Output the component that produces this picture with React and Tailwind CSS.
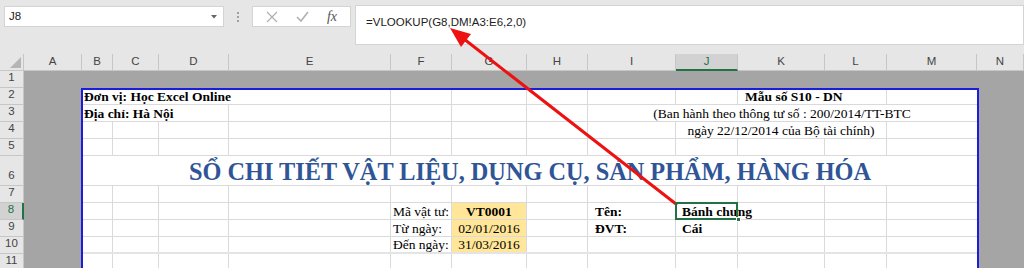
import React from "react";

// column widths inside the print area (B..M)
const W = { B: 30, C: 46, D: 70, E: 162, F: 61, G: 75, H: 61, I: 88, J: 62, K: 87, L: 62, M: 89 };
const COLS = ["B", "C", "D", "E", "F", "G", "H", "I", "J", "K", "L", "M"];

const headerCols = [
  { l: "A", w: 58 },
  { l: "B", w: 31 },
  { l: "C", w: 46 },
  { l: "D", w: 70 },
  { l: "E", w: 162 },
  { l: "F", w: 61 },
  { l: "G", w: 75 },
  { l: "H", w: 61 },
  { l: "I", w: 88 },
  { l: "J", w: 62, active: true },
  { l: "K", w: 87 },
  { l: "L", w: 62 },
  { l: "M", w: 90 },
  { l: "N", w: 47 },
];

const rowHeights = [17, 17, 17, 17, 17, 30, 17, 17, 17, 17, 17];

const serif = { fontFamily: "'Liberation Serif', 'Times New Roman', serif" };

const Cell = ({ w, line = true, className = "", children }) => (
  <div
    style={{ width: w }}
    className={`shrink-0 h-full flex items-end leading-none pb-[1px] whitespace-nowrap ${line ? "border-r border-[#dadada]" : ""} ${className}`}
  >
    {children}
  </div>
);

const span = (...cols) => cols.reduce((s, c) => s + W[c], 0);

const Row = ({ h, className = "border-[#dadada]", children }) => (
  <div style={{ height: h }} className={`flex border-b text-[13.5px] text-black ${className}`}>
    {children}
  </div>
);

const empties = (cols) => cols.map((c) => <Cell key={c} w={W[c]} />);

export default function App() {
  return (
    <div className="relative w-[1024px] h-[268px] overflow-hidden bg-[#e6e6e6] select-none" style={{ fontFamily: "'Liberation Sans', Arial, sans-serif" }}>
      {/* formula bar */}
      <div className="h-[54px] flex items-start pt-[6px] pl-[4px]">
        <div className="w-[220px] h-[21px] bg-white border border-[#d4d4d4] flex items-center justify-between pl-[4px] pr-[6px]">
          <span className="text-[11.5px] text-[#222]">J8</span>
          <svg width="6" height="4" viewBox="0 0 6 4"><path d="M0 0h6L3 3.5z" fill="#666" /></svg>
        </div>
        <div className="w-[28px] h-[21px] flex flex-col items-center justify-center gap-[2px]">
          <span className="w-[2px] h-[2px] bg-[#a0a0a0]" />
          <span className="w-[2px] h-[2px] bg-[#a0a0a0]" />
          <span className="w-[2px] h-[2px] bg-[#a0a0a0]" />
        </div>
        <div className="w-[99px] h-[21px] bg-white border border-[#d4d4d4] flex items-center justify-around px-[4px]">
          <svg width="12" height="12" viewBox="0 0 12 12"><path d="M1 1l10 10M11 1L1 11" stroke="#b0b0b0" strokeWidth="1.2" /></svg>
          <svg width="13" height="11" viewBox="0 0 13 11"><path d="M1 6l4 4 7-9" stroke="#b0b0b0" strokeWidth="1.6" fill="none" /></svg>
          <span className="text-[14px] italic text-[#555]" style={serif}>fx</span>
        </div>
        <div className="ml-[4px] -mt-[1px] flex-1 h-[40px] bg-white border border-[#d4d4d4] pl-[10px] pt-[3px]">
          <span className="text-[11.5px] text-[#222]">=VLOOKUP(G8,DM!A3:E6,2,0)</span>
        </div>
      </div>

      {/* column headers */}
      <div className="flex h-[17px]">
        <div className="w-[24px] shrink-0 h-full border-r border-b border-[#c6c6c6] flex items-end justify-end p-[2px]">
          <svg width="11" height="11" viewBox="0 0 11 11"><path d="M11 0v11H0z" fill="#b5b5b5" /></svg>
        </div>
        {headerCols.map((c) => (
          <div
            key={c.l}
            style={{ width: c.w }}
            className={`shrink-0 h-full flex items-center justify-center text-[11.5px] border-r ${
              c.active ? "bg-[#d2d2d2] text-[#217346] border-b-2 border-b-[#217346] border-r-[#c6c6c6]" : "text-[#444] border-b border-[#c6c6c6]"
            }`}
          >
            {c.l}
          </div>
        ))}
      </div>

      <div className="flex">
        {/* row headers */}
        <div className="w-[24px] shrink-0 flex flex-col">
          {rowHeights.map((h, i) => (
            <div
              key={i}
              style={{ height: h }}
              className={`flex items-end justify-center pb-[1px] text-[11.5px] border-b border-[#c6c6c6] ${
                i === 7 ? "bg-[#d2d2d2] text-[#217346] border-r-2 border-r-[#217346]" : "text-[#444] border-r border-r-[#c6c6c6]"
              }`}
            >
              {i + 1}
            </div>
          ))}
        </div>

        <div className="flex-1 flex flex-col bg-[#a5a5a5]">
          {/* row 1 */}
          <div className="h-[17px]" />
          <div className="flex">
            {/* column A */}
            <div className="w-[57px] shrink-0" />
            {/* print area B..M */}
            <div className="w-[898px] shrink-0 bg-white border-2 border-b-0 border-[#1c1cdc]" style={serif}>
              <Row h={15}>
                <Cell w={span("B", "C", "D", "E")} className="font-bold pl-[1px]">Đơn vị: Học Excel Online</Cell>
                {empties(["F", "G", "H", "I", "J"])}
                <Cell w={span("K", "L")} className="font-bold pl-[7px]">Mẫu số S10 - DN</Cell>
                <Cell w={W.M} line={false} />
              </Row>
              <Row h={17}>
                <Cell w={span("B", "C", "D")} className="font-bold pl-[1px]">Địa chỉ: Hà Nội</Cell>
                {empties(["E", "F", "G", "H"])}
                <Cell w={span("I", "J", "K", "L", "M")} line={false} className="justify-center">
                  (Ban hành theo thông tư số : 200/2014/TT-BTC
                </Cell>
              </Row>
              <Row h={17}>
                {empties(["B", "C", "D", "E", "F", "G", "H", "I"])}
                <Cell w={span("J", "K", "L")} className="justify-center">ngày 22/12/2014 của Bộ tài chính)</Cell>
                <Cell w={W.M} line={false} />
              </Row>
              <Row h={17}>
                {empties(COLS.slice(0, 11))}
                <Cell w={W.M} line={false} />
              </Row>
              <Row h={30}>
                <Cell w={894} line={false} className="justify-center pb-0 text-[24.3px] font-bold text-[#2f5597]">
                  SỔ CHI TIẾT VẬT LIỆU, DỤNG CỤ, SẢN PHẨM, HÀNG HÓA
                </Cell>
              </Row>
              <Row h={17}>
                {empties(COLS.slice(0, 11))}
                <Cell w={W.M} line={false} />
              </Row>
              <Row h={17}>
                {empties(["B", "C", "D", "E"])}
                <Cell w={W.F} className="pl-[2px]">Mã vật tư:</Cell>
                <Cell w={W.G} className="justify-center font-bold bg-[#ffe699]">VT0001</Cell>
                <Cell w={W.H} />
                <Cell w={W.I} className="font-bold pl-[7px]">Tên:</Cell>
                <div style={{ width: W.J }} className="relative shrink-0 h-full flex items-end leading-none pb-[1px] pl-[6px] whitespace-nowrap font-bold z-10">
                  Bánh chưng
                  <div className="absolute -left-[1px] -top-[1px] w-[63px] h-[18px] border-2 border-[#217346]" />
                  <div className="absolute -right-[3px] -bottom-[3px] w-[5px] h-[5px] bg-[#217346] border border-white" />
                </div>
                <Cell w={W.K} />
                <Cell w={W.L} />
                <Cell w={W.M} line={false} />
              </Row>
              <Row h={17}>
                {empties(["B", "C", "D", "E"])}
                <Cell w={W.F} className="pl-[2px]">Từ ngày:</Cell>
                <Cell w={W.G} className="justify-center bg-[#ffe699]">02/01/2016</Cell>
                <Cell w={W.H} />
                <Cell w={W.I} className="font-bold pl-[7px]">ĐVT:</Cell>
                <Cell w={W.J} className="font-bold pl-[6px]">Cái</Cell>
                <Cell w={W.K} />
                <Cell w={W.L} />
                <Cell w={W.M} line={false} />
              </Row>
              <Row h={17} className="border-b-2 border-[#e4e4e4]">
                {empties(["B", "C", "D", "E"])}
                <Cell w={W.F} className="pl-[2px]">Đến ngày:</Cell>
                <Cell w={W.G} className="justify-center bg-[#ffe699]">31/03/2016</Cell>
                {empties(["H", "I", "J", "K", "L"])}
                <Cell w={W.M} line={false} />
              </Row>
              <Row h={17}>
                {empties(COLS.slice(0, 11))}
                <Cell w={W.M} line={false} />
              </Row>
            </div>
            {/* column N */}
            <div className="flex-1" />
          </div>
        </div>
      </div>

      {/* red arrow */}
      <svg className="absolute inset-0 pointer-events-none" width="1024" height="268" viewBox="0 0 1024 268">
        <line x1="676" y1="204" x2="464" y2="39" stroke="#ee1111" strokeWidth="3" strokeLinecap="round" />
        <polygon points="450,28 471,34 461,47" fill="#ee1111" />
      </svg>
    </div>
  );
}
